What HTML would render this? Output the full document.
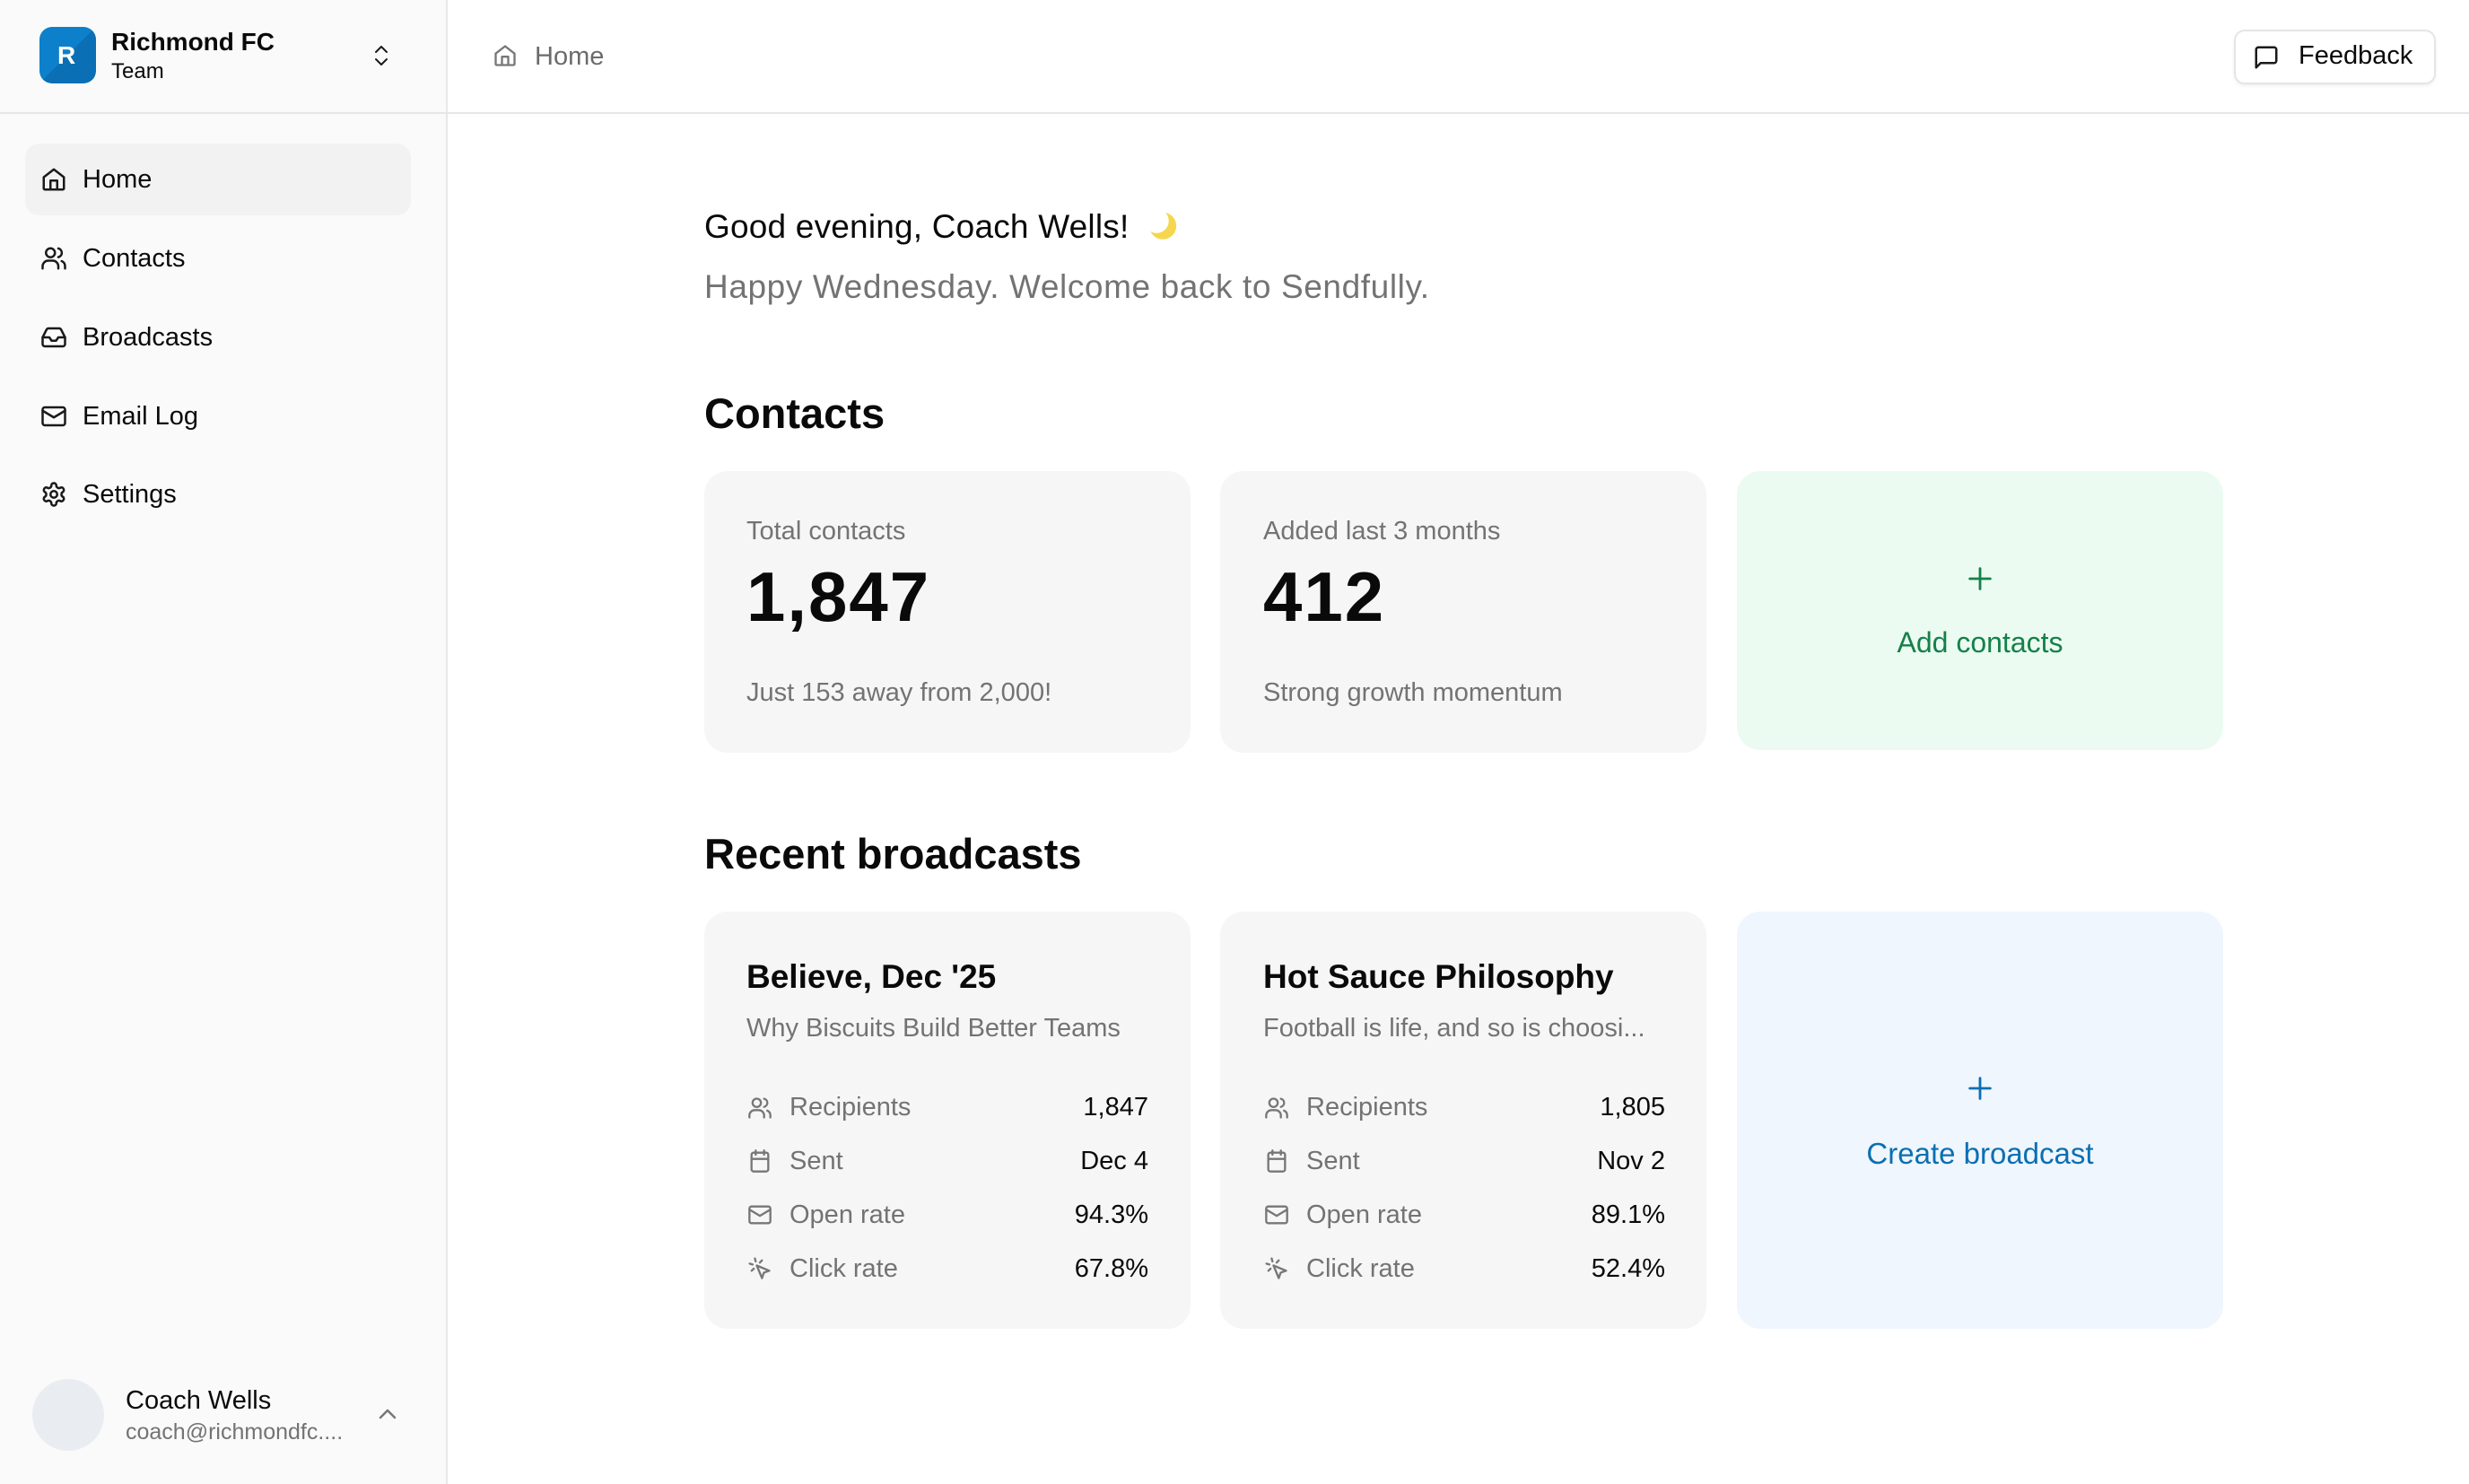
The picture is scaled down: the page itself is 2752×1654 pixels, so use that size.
<!DOCTYPE html>
<html><head><meta charset="utf-8">
<style>
*{margin:0;padding:0;box-sizing:border-box}
html,body{width:2752px;height:1654px;overflow:hidden;background:#fff;font-family:"Liberation Sans",Arial,sans-serif;color:#0a0a0a}
.t{position:absolute;white-space:nowrap;line-height:1}
.side{position:absolute;left:0;top:0;width:499px;height:1654px;background:#fafafa;border-right:2px solid #e8e8ea}
.hline{position:absolute;left:0;top:125px;width:2752px;height:2px;background:#e6e6e8}
svg{position:absolute;overflow:visible}
.card{position:absolute;border-radius:26px;background:#f6f6f6}
.g{color:#737373}
.ic{fill:none;stroke:#1a1a1a;stroke-width:2;stroke-linecap:round;stroke-linejoin:round}
.icg{fill:none;stroke:#777;stroke-width:2;stroke-linecap:round;stroke-linejoin:round}
</style></head><body>
<div class="side"></div>
<div class="hline"></div>

<!-- team -->
<div style="position:absolute;left:44px;top:30px;width:63px;height:63px;border-radius:14px;background:linear-gradient(135deg,#0d80cc 50%,#0a6fb5 50%)"></div>
<div class="t" style="left:64px;top:48px;font-size:28px;color:#fff;font-weight:bold">R</div>
<div class="t" style="left:124px;top:33px;font-size:28px;font-weight:600">Richmond FC</div>
<div class="t" style="left:124px;top:68px;font-size:24px">Team</div>
<svg style="left:413px;top:48px" width="24" height="28" viewBox="0 0 24 28"><path class="ic" d="M6 10l6-6 6 6M6 18l6 6 6-6"/></svg>

<!-- nav -->
<div style="position:absolute;left:28px;top:160px;width:430px;height:80px;border-radius:16px;background:#f2f2f2"></div>
<svg style="left:45px;top:185px" width="30" height="30" viewBox="0 0 24 24"><path class="ic" d="M3 10l9-7 9 7v10a1 1 0 0 1-1 1H4a1 1 0 0 1-1-1z"/><path class="ic" d="M9 21v-8h6v8"/></svg>
<div class="t" style="left:92px;top:186px;font-size:29px">Home</div>

<svg style="left:45px;top:273px" width="30" height="30" viewBox="0 0 24 24"><circle class="ic" cx="9" cy="7" r="4"/><path class="ic" d="M2 21v-2a5 5 0 0 1 5-5h4a5 5 0 0 1 5 5v2M16 3.1a4 4 0 0 1 0 7.8M22 21v-2a5 5 0 0 0-3-4.6"/></svg>
<div class="t" style="left:92px;top:274px;font-size:29px">Contacts</div>

<svg style="left:45px;top:361px" width="30" height="30" viewBox="0 0 24 24"><path class="ic" d="M22 12h-6l-2 3h-4l-2-3H2"/><path class="ic" d="M5.5 5.1L2 12v6a2 2 0 0 0 2 2h16a2 2 0 0 0 2-2v-6l-3.5-6.9A2 2 0 0 0 16.8 4H7.2a2 2 0 0 0-1.7 1.1z"/></svg>
<div class="t" style="left:92px;top:362px;font-size:29px">Broadcasts</div>

<svg style="left:45px;top:449px" width="30" height="30" viewBox="0 0 24 24"><rect class="ic" x="2" y="4" width="20" height="16" rx="2"/><path class="ic" d="M22 7l-10 6L2 7"/></svg>
<div class="t" style="left:92px;top:450px;font-size:29px">Email Log</div>

<svg style="left:45px;top:536px" width="30" height="30" viewBox="0 0 24 24"><path class="ic" d="M12.2 2h-.4a2 2 0 0 0-2 2v.2a2 2 0 0 1-1 1.7l-.4.3a2 2 0 0 1-2 0l-.2-.1a2 2 0 0 0-2.7.7l-.2.4a2 2 0 0 0 .7 2.7l.2.1a2 2 0 0 1 1 1.7v.5a2 2 0 0 1-1 1.8l-.2.1a2 2 0 0 0-.7 2.7l.2.4a2 2 0 0 0 2.7.7l.2-.1a2 2 0 0 1 2 0l.4.3a2 2 0 0 1 1 1.7v.2a2 2 0 0 0 2 2h.4a2 2 0 0 0 2-2v-.2a2 2 0 0 1 1-1.7l.4-.3a2 2 0 0 1 2 0l.2.1a2 2 0 0 0 2.7-.7l.2-.4a2 2 0 0 0-.7-2.7l-.2-.1a2 2 0 0 1-1-1.8v-.5a2 2 0 0 1 1-1.7l.2-.1a2 2 0 0 0 .7-2.7l-.2-.4a2 2 0 0 0-2.7-.7l-.2.1a2 2 0 0 1-2 0l-.4-.3a2 2 0 0 1-1-1.7V4a2 2 0 0 0-2-2z"/><circle class="ic" cx="12" cy="12" r="3"/></svg>
<div class="t" style="left:92px;top:537px;font-size:29px">Settings</div>

<!-- user -->
<div style="position:absolute;left:36px;top:1537px;width:80px;height:80px;border-radius:50%;background:#e9ecf1"></div>
<div class="t" style="left:140px;top:1547px;font-size:29px;font-weight:500">Coach Wells</div>
<div class="t" style="left:140px;top:1584px;font-size:25px;color:#737373">coach@richmondfc....</div>
<svg style="left:420px;top:1568px" width="24" height="16" viewBox="0 0 24 16"><path class="icg" d="M4 12l8-8 8 8" style="stroke-width:2.5"/></svg>

<!-- header -->
<svg style="left:549px;top:48px" width="28" height="28" viewBox="0 0 24 24"><path class="icg" d="M3 10l9-7 9 7v10a1 1 0 0 1-1 1H4a1 1 0 0 1-1-1z"/><path class="icg" d="M9 21v-8h6v8"/></svg>
<div class="t" style="left:596px;top:49px;font-size:29px;color:#6b6b6b">Home</div>

<div style="position:absolute;left:2490px;top:33px;width:225px;height:61px;border:2px solid #e5e5e5;border-radius:12px;background:#fff;box-shadow:0 2px 3px rgba(0,0,0,.06)"></div>
<svg style="left:2511px;top:49px" width="30" height="30" viewBox="0 0 24 24"><path class="ic" d="M21 15a2 2 0 0 1-2 2H7l-4 4V5a2 2 0 0 1 2-2h14a2 2 0 0 1 2 2z"/></svg>
<div class="t" style="left:2562px;top:48px;font-size:29px;font-weight:500">Feedback</div>

<!-- greeting -->
<div class="t" style="left:785px;top:234px;font-size:37px;font-weight:500;letter-spacing:0.2px">Good evening, Coach Wells!</div>
<svg style="left:1278px;top:234px" width="36" height="36" viewBox="0 0 24 24"><path d="M14 2a9 9 0 0 1-11 14a10 10 0 1 0 11-14z" fill="#f5d64e"/></svg>
<div class="t" style="left:785px;top:301px;font-size:37px;color:#737373;letter-spacing:0.6px">Happy Wednesday. Welcome back to Sendfully.</div>

<div class="t" style="left:785px;top:437px;font-size:47px;font-weight:600">Contacts</div>

<div class="card" style="left:785px;top:525px;width:542px;height:314px"></div>
<div class="t g" style="left:832px;top:578px;font-size:29px">Total contacts</div>
<div class="t" style="left:832px;top:626px;font-size:78px;font-weight:bold;letter-spacing:2px">1,847</div>
<div class="t g" style="left:832px;top:758px;font-size:29px">Just 153 away from 2,000!</div>

<div class="card" style="left:1360px;top:525px;width:542px;height:314px"></div>
<div class="t g" style="left:1408px;top:578px;font-size:29px">Added last 3 months</div>
<div class="t" style="left:1408px;top:626px;font-size:78px;font-weight:bold;letter-spacing:2px">412</div>
<div class="t g" style="left:1408px;top:758px;font-size:29px">Strong growth momentum</div>

<div class="card" style="left:1936px;top:525px;width:542px;height:311px;background:#ebfbf1"></div>
<svg style="left:2190px;top:628px" width="34" height="34" viewBox="0 0 24 24"><path d="M12 4v16M4 12h16" stroke="#15804a" stroke-width="2" stroke-linecap="round"/></svg>
<div class="t" style="left:1936px;width:542px;text-align:center;top:700px;font-size:32px;color:#15804a;font-weight:500">Add contacts</div>

<div class="t" style="left:785px;top:928px;font-size:47px;font-weight:600">Recent broadcasts</div>

<!-- broadcast 1 -->
<div class="card" style="left:785px;top:1016px;width:542px;height:465px"></div>
<div class="t" style="left:832px;top:1070px;font-size:37px;font-weight:600">Believe, Dec '25</div>
<div class="t g" style="left:832px;top:1132px;font-size:29px">Why Biscuits Build Better Teams</div>

<!-- broadcast 2 -->
<div class="card" style="left:1360px;top:1016px;width:542px;height:465px"></div>
<div class="t" style="left:1408px;top:1070px;font-size:37px;font-weight:600">Hot Sauce Philosophy</div>
<div class="t g" style="left:1408px;top:1132px;font-size:29px">Football is life, and so is choosi...</div>

<svg style="left:833px;top:1221px" width="28" height="28" viewBox="0 0 24 24"><circle class="icg" cx="9" cy="7" r="4"/><path class="icg" d="M2 21v-2a5 5 0 0 1 5-5h4a5 5 0 0 1 5 5v2M16 3.1a4 4 0 0 1 0 7.8M22 21v-2a5 5 0 0 0-3-4.6"/></svg>
<div class="t g" style="left:880px;top:1220px;font-size:29px">Recipients</div>
<div class="t" style="right:1472px;top:1220px;font-size:29px">1,847</div>
<svg style="left:833px;top:1280px" width="28" height="28" viewBox="0 0 24 24"><rect class="icg" x="4" y="4" width="16" height="18" rx="2"/><path class="icg" d="M8 2v4M16 2v4M4 10h16"/></svg>
<div class="t g" style="left:880px;top:1280px;font-size:29px">Sent</div>
<div class="t" style="right:1472px;top:1280px;font-size:29px">Dec 4</div>
<svg style="left:833px;top:1340px" width="28" height="28" viewBox="0 0 24 24"><rect class="icg" x="2" y="4" width="20" height="16" rx="2"/><path class="icg" d="M22 7l-10 6L2 7"/></svg>
<div class="t g" style="left:880px;top:1340px;font-size:29px">Open rate</div>
<div class="t" style="right:1472px;top:1340px;font-size:29px">94.3%</div>
<svg style="left:833px;top:1400px" width="28" height="28" viewBox="0 0 24 24"><path class="icg" d="M9 9l5 12 1.8-5.2L21 14z"/><path class="icg" d="M7.2 2.2L8 5.1M5.1 8L2.2 7.2M14 4.1L12 6.2M6.2 12l-2.1 2"/></svg>
<div class="t g" style="left:880px;top:1400px;font-size:29px">Click rate</div>
<div class="t" style="right:1472px;top:1400px;font-size:29px">67.8%</div>

<svg style="left:1409px;top:1221px" width="28" height="28" viewBox="0 0 24 24"><circle class="icg" cx="9" cy="7" r="4"/><path class="icg" d="M2 21v-2a5 5 0 0 1 5-5h4a5 5 0 0 1 5 5v2M16 3.1a4 4 0 0 1 0 7.8M22 21v-2a5 5 0 0 0-3-4.6"/></svg>
<div class="t g" style="left:1456px;top:1220px;font-size:29px">Recipients</div>
<div class="t" style="right:896px;top:1220px;font-size:29px">1,805</div>
<svg style="left:1409px;top:1280px" width="28" height="28" viewBox="0 0 24 24"><rect class="icg" x="4" y="4" width="16" height="18" rx="2"/><path class="icg" d="M8 2v4M16 2v4M4 10h16"/></svg>
<div class="t g" style="left:1456px;top:1280px;font-size:29px">Sent</div>
<div class="t" style="right:896px;top:1280px;font-size:29px">Nov 2</div>
<svg style="left:1409px;top:1340px" width="28" height="28" viewBox="0 0 24 24"><rect class="icg" x="2" y="4" width="20" height="16" rx="2"/><path class="icg" d="M22 7l-10 6L2 7"/></svg>
<div class="t g" style="left:1456px;top:1340px;font-size:29px">Open rate</div>
<div class="t" style="right:896px;top:1340px;font-size:29px">89.1%</div>
<svg style="left:1409px;top:1400px" width="28" height="28" viewBox="0 0 24 24"><path class="icg" d="M9 9l5 12 1.8-5.2L21 14z"/><path class="icg" d="M7.2 2.2L8 5.1M5.1 8L2.2 7.2M14 4.1L12 6.2M6.2 12l-2.1 2"/></svg>
<div class="t g" style="left:1456px;top:1400px;font-size:29px">Click rate</div>
<div class="t" style="right:896px;top:1400px;font-size:29px">52.4%</div>

<!-- create broadcast -->
<div class="card" style="left:1936px;top:1016px;width:542px;height:465px;background:#eff6fd"></div>
<svg style="left:2190px;top:1196px" width="34" height="34" viewBox="0 0 24 24"><path d="M12 4v16M4 12h16" stroke="#0b6fb3" stroke-width="2" stroke-linecap="round"/></svg>
<div class="t" style="left:1936px;width:542px;text-align:center;top:1269px;font-size:33px;color:#0b6fb3;font-weight:500">Create broadcast</div>
</body></html>
